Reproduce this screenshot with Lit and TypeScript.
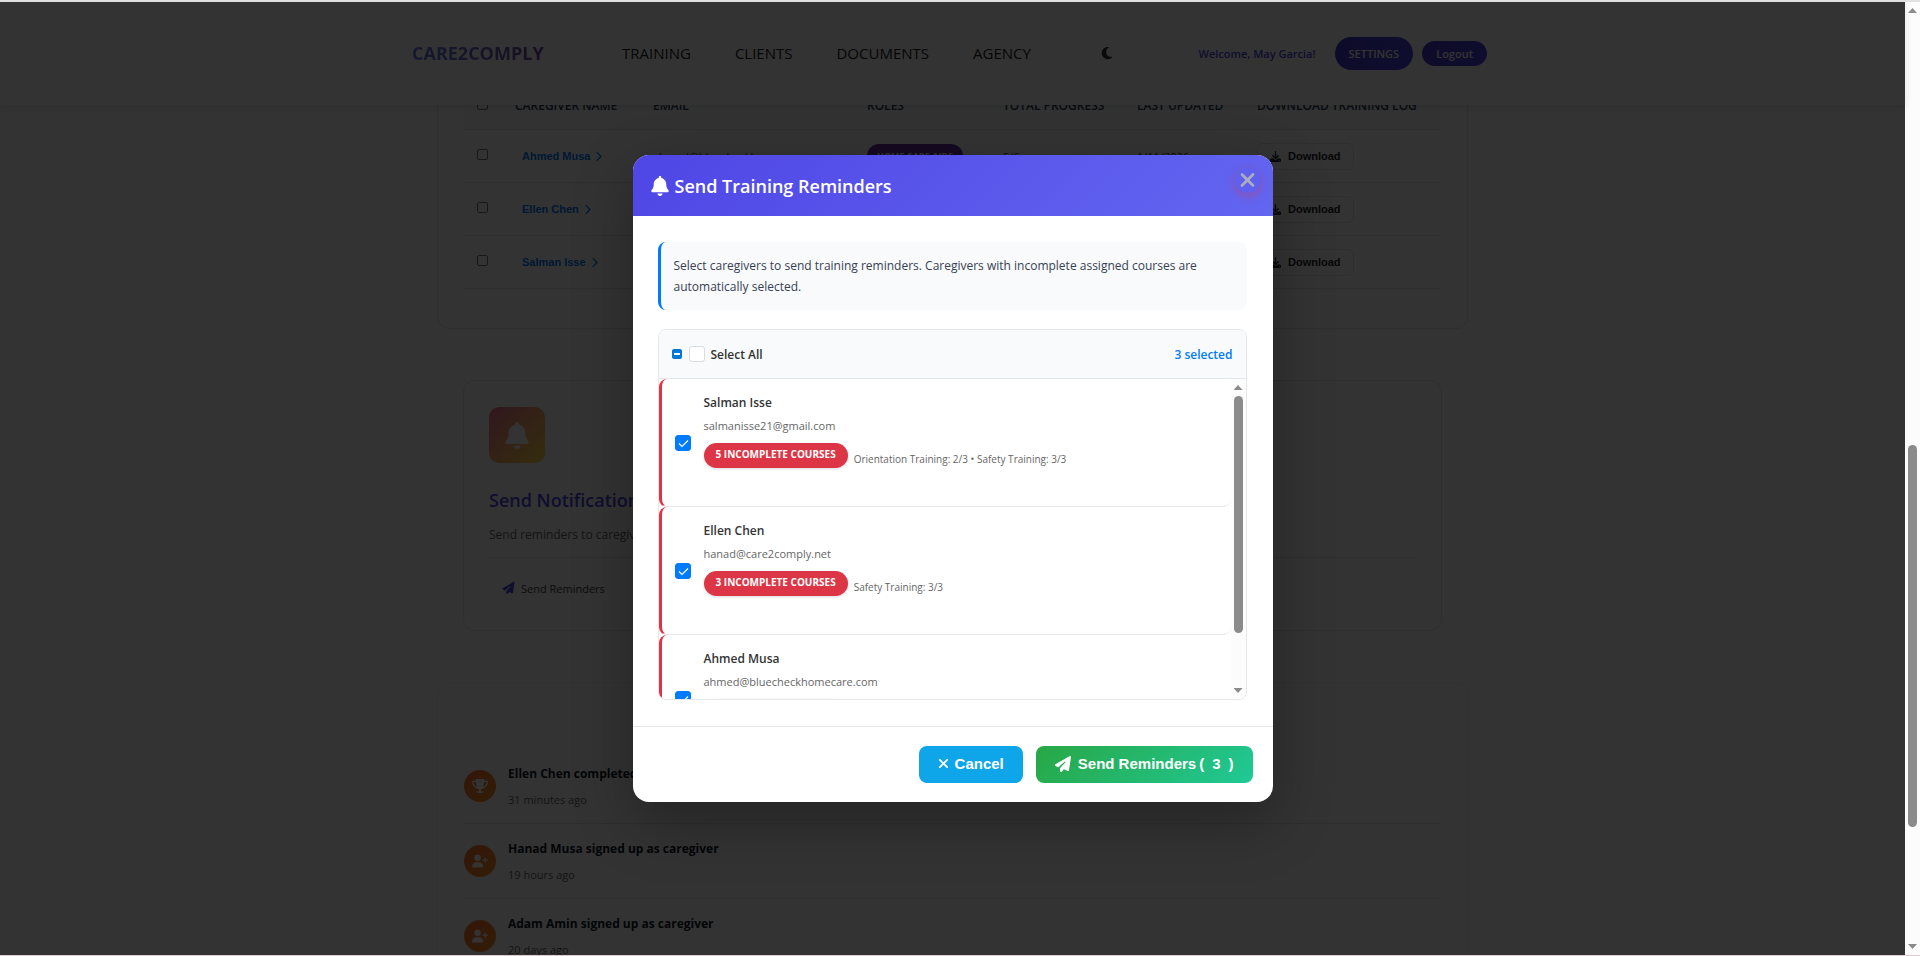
import { LitElement, html, css, svg, nothing } from "lit";
import { customElement, property, state } from "lit/decorators.js";

const bell = svg`<path d="M224 0c-17.7 0-32 14.300-32 32v19.200C119 66 64 130.600 64 208v18.800c0 47-17.300 92.400-48.500 127.600l-7.400 8.300c-8.400 9.400-10.400 22.900-5.300 34.400S19.400 416 32 416h384c12.600 0 24-7.400 29.200-18.900s3.100-25-5.300-34.400l-7.400-8.300C401.300 319.200 384 273.900 384 226.800V208c0-77.400-55-142-128-156.800V32c0-17.700-14.300-32-32-32zm45.300 493.300c12-12 18.700-28.300 18.700-45.300H160c0 17 6.700 33.300 18.700 45.300S207 512 224 512s33.300-6.700 45.300-18.700z"/>`;
const plane = svg`<path d="M498.100 5.600c10.100 7 15.400 19.100 13.500 31.200l-64 416c-1.500 9.700-7.400 18.200-16 23s-18.900 5.400-28 1.600L284 427.700l-68.500 74.100c-8.900 9.700-22.900 12.900-35.200 8.100S160 493.200 160 480v-83.600c0-4 1.500-7.800 4.200-10.800l167.600-182.800c5.800-6.300 5.600-16-.4-22s-15.700-6.400-22-.7L106 360.800l-88.300-44.200C7.100 311.300.3 300.700 0 288.900s5.900-22.800 16.100-28.700l448-256c10.700-6.100 23.900-5.500 34 1.400z"/>`;
const times = svg`<path d="M342.600 150.600c12.500-12.500 12.500-32.800 0-45.300s-32.800-12.500-45.300 0L192 210.700 86.600 105.400c-12.500-12.500-32.800-12.500-45.300 0s-12.500 32.800 0 45.300L146.700 256 41.400 361.400c-12.500 12.500-12.500 32.800 0 45.300s32.800 12.500 45.300 0L192 301.300l105.400 105.300c12.500 12.500 32.800 12.500 45.300 0s12.500-32.800 0-45.300L237.300 256l105.300-105.400z"/>`;
const moon = svg`<path d="M223.500 32C100 32 0 132.300 0 256s100 224 223.500 224c60.600 0 115.500-24.200 155.800-63.400 5-4.900 6.300-12.500 3.100-18.700s-10.100-9.700-17-8.500c-9.800 1.700-19.800 2.600-30.100 2.600-96.900 0-175.500-78.800-175.500-176 0-65.800 36-123.100 89.300-153.300 6.100-3.500 9.200-10.500 7.700-17.300s-7.300-11.900-14.300-12.500c-6.300-.5-12.600-.8-19-.8z"/>`;
const download = svg`<path d="M288 32c0-17.700-14.300-32-32-32s-32 14.300-32 32v242.700l-73.400-73.400c-12.500-12.500-32.800-12.500-45.300 0s-12.500 32.800 0 45.300l128 128c12.500 12.500 32.800 12.500 45.300 0l128-128c12.500-12.500 12.500-32.800 0-45.300s-32.800-12.500-45.300 0L288 274.700V32zM64 352c-35.300 0-64 28.700-64 64v32c0 35.300 28.700 64 64 64h384c35.300 0 64-28.700 64-64v-32c0-35.300-28.700-64-64-64H346.500l-45.300 45.300c-25 25-65.500 25-90.500 0L165.500 352H64zm368 56a24 24 0 1 1 0 48 24 24 0 1 1 0-48z"/>`;
const chevron = svg`<path d="M310.600 233.400c12.500 12.500 12.500 32.800 0 45.300l-192 192c-12.500 12.500-32.800 12.500-45.300 0s-12.500-32.800 0-45.300L242.700 256 73.400 86.600c-12.500-12.500-12.500-32.800 0-45.300s32.800-12.500 45.300 0l192 192z"/>`;
const trophy = svg`<path d="M400 0H176c-26.500 0-48.100 21.800-47.100 48.200.2 5.300.4 10.600.7 15.800H24C10.700 64 0 74.700 0 88c0 92.600 33.500 157 78.500 200.700 44.300 43.100 98.300 64.800 138.100 75.800 23.400 6.500 39.400 26 39.400 45.600 0 20.900-17 37.900-37.900 37.900H192c-17.700 0-32 14.300-32 32s14.300 32 32 32h192c17.700 0 32-14.300 32-32s-14.300-32-32-32h-26.100c-20.900 0-37.900-17-37.900-37.900 0-19.600 15.900-39.200 39.400-45.600 39.900-11 93.900-32.700 138.200-75.800C542.500 245 576 180.600 576 88c0-13.300-10.700-24-24-24H446.400c.3-5.200.5-10.400.7-15.800C448.100 21.800 426.500 0 400 0zM48.900 112h84.400c9.100 90.100 29.200 150.300 51.900 190.600-24.900-11-50.800-26.500-73.200-48.300-32-31.100-58-76-63-142.300zm415.200 142.300c-22.400 21.800-48.300 37.300-73.200 48.300 22.700-40.300 42.800-100.500 51.900-190.600h84.400c-5.100 66.300-31.100 111.200-63 142.300z"/>`;
const userPlus = svg`<path d="M96 128a128 128 0 1 1 256 0A128 128 0 1 1 96 128zM0 482.300C0 383.800 79.800 304 178.300 304h91.400C368.200 304 448 383.800 448 482.300c0 16.400-13.300 29.700-29.700 29.700H29.700C13.300 512 0 498.700 0 482.300zM504 312v-64h-64c-13.300 0-24-10.700-24-24s10.700-24 24-24h64v-64c0-13.300 10.700-24 24-24s24 10.700 24 24v64h64c13.300 0 24 10.700 24 24s-10.700 24-24 24h-64v64c0 13.300-10.700 24-24 24s-24-10.700-24-24z"/>`;

const icon = (shape: unknown, box: string, cls: string) =>
  html`<svg class=${cls} viewBox=${box} fill="currentColor" aria-hidden="true">${shape}</svg>`;

const base = css`
  * { box-sizing: border-box; }
  button, input { font: inherit; margin: 0; }
  button { border: 0; cursor: pointer; }
  a { text-decoration: none; color: inherit; }
  h1, h2, p, ul { margin: 0; padding: 0; }
  ul { list-style: none; }
  svg { display: block; flex: none; }
`;

@customElement("scroll-track")
class ScrollTrack extends LitElement {
  @property({ type: Number }) start = 0;
  @property({ type: Number }) size = 50;

  static styles = css`
    :host {
      display: flex;
      flex-direction: column;
      align-items: center;
      flex: none;
      width: 15px;
      padding: 6px 0;
      background: #fcfcfc;
    }
    .arrow {
      width: 9px;
      height: 5px;
      background: #8b8b8b;
      clip-path: polygon(50% 0, 100% 100%, 0 100%);
    }
    .down { clip-path: polygon(0 0, 100% 0, 50% 100%); }
    .lane { display: flex; flex-direction: column; flex: 1; width: 9px; margin: 6px 0; }
    .thumb { width: 9px; border-radius: 5px; background: #8b8b8b; }
  `;

  render() {
    return html`
      <div class="arrow"></div>
      <div class="lane">
        <div style="height:${this.start}%"></div>
        <div class="thumb" style="height:${this.size}%"></div>
      </div>
      <div class="arrow down"></div>
    `;
  }
}

@customElement("site-header")
class SiteHeader extends LitElement {
  static styles = [base, css`
    :host {
      display: block;
      flex: none;
      height: 103px;
      background: #fff;
      box-shadow: 0 2px 8px rgba(0, 0, 0, 0.1);
      position: relative;
      z-index: 1;
    }
    .bar {
      display: flex;
      align-items: center;
      width: 1081px;
      max-width: 100%;
      height: 100%;
      margin: 0 auto;
      padding: 0 6px 1px 0;
    }
    .logo {
      width: 210px;
      font-size: 18px;
      font-weight: 700;
      color: transparent;
      background: linear-gradient(90deg, #667eea, #764ba2 130px);
      background-clip: text;
      -webkit-background-clip: text;
    }
    nav { display: flex; gap: 44px; font-size: 15px; color: #222; }
    .theme { margin: 0 auto 0 70px; padding: 0; background: none; color: #333; }
    .moon { width: 12px; height: 14px; }
    .user { display: flex; align-items: center; gap: 9px; font-size: 11px; font-weight: 600; }
    .hello { color: #4f46e5; margin-right: 10px; }
    .settings, .logout { color: #fff; background: linear-gradient(135deg, #4338ca, #4f46e5); border-radius: 17px; }
    .settings { display: block; padding: 8px 14px; line-height: 17px; }
    .logout { padding: 4px 14px; line-height: 17px; }
  `];

  render() {
    return html`
      <div class="bar">
        <a class="logo" href="#">CARE2COMPLY</a>
        <nav>
          <a href="#">TRAINING</a><a href="#">CLIENTS</a><a href="#">DOCUMENTS</a><a href="#">AGENCY</a>
        </nav>
        <button class="theme" aria-label="Dark mode">${icon(moon, "0 0 384 512", "moon")}</button>
        <div class="user">
          <span class="hello">Welcome, May Garcia!</span>
          <a class="settings" href="#">SETTINGS</a>
          <button class="logout">Logout</button>
        </div>
      </div>
    `;
  }
}

interface Caregiver { name: string; email: string; role?: string; progress?: string; updated?: string; }

const caregivers: Caregiver[] = [
  { name: "Ahmed Musa", email: "ahmed@bluecheckhomecare.com", role: "HOME CARE AIDE", progress: "5/6 courses", updated: "1/11/2026" },
  { name: "Ellen Chen", email: "hanad@care2comply.net" },
  { name: "Salman Isse", email: "salmanisse21@gmail.com" },
];

const activity = [
  { text: "Ellen Chen completed training", when: "31 minutes ago", shape: trophy, box: "0 0 576 512" },
  { text: "Hanad Musa signed up as caregiver", when: "19 hours ago", shape: userPlus, box: "0 0 640 512" },
  { text: "Adam Amin signed up as caregiver", when: "20 days ago", shape: userPlus, box: "0 0 640 512" },
];

@customElement("agency-page")
class AgencyPage extends LitElement {
  static styles = [base, css`
    :host { display: block; flex: 1; min-height: 0; overflow: hidden; background: #fdfdfe; }
    .content { width: 1031px; max-width: 100%; margin: 0 auto; }
    .card { border: 1px solid #e6e6ea; border-radius: 12px; background: #fff; }
    .table-card { margin-top: -60px; padding: 36px 26px 39px; }
    table { width: 100%; border-collapse: separate; border-spacing: 0; table-layout: fixed; font-size: 11px; }
    th, td { padding: 0; text-align: left; border-bottom: 1px solid #e1e4e8; }
    th { height: 48px; font-weight: 600; font-size: 12px; color: #2c3e50; background: #fafbfc; white-space: nowrap; }
    td { height: 53px; color: #444; }
    .c-check { width: 51px; padding-left: 13px; }
    .c-name { width: 138px; }
    .c-email { width: 214px; }
    .c-role { width: 136px; }
    .c-progress { width: 134px; }
    .c-date { width: 120px; }
    .tick {
      display: block;
      appearance: none;
      width: 11px;
      height: 11px;
      margin-bottom: 3px;
      border: 1px solid #767676;
      border-radius: 2px;
    }
    .person {
      display: flex;
      align-items: center;
      gap: 6px;
      padding-left: 7px;
      font: bold 11px "Liberation Sans", Arial, sans-serif;
      color: #007bff;
    }
    .chev { width: 6px; height: 11px; }
    .role {
      display: inline-block;
      padding: 0 10px;
      line-height: 24px;
      border-radius: 12px;
      background: #6b2fa0;
      color: #fff;
      font-size: 9px;
      font-weight: 700;
    }
    .dl {
      display: flex;
      align-items: center;
      gap: 7px;
      height: 27px;
      padding: 0 12px;
      border: 1px solid #e1e4e8;
      border-radius: 6px;
      background: #fff;
      color: #1f2328;
      font: bold 11px "Liberation Sans", Arial, sans-serif;
    }
    .dl-icon { width: 11px; height: 11px; }
    .notify { margin: 51px 26px 0; padding: 26px 25px 23px; }
    .tile {
      display: grid;
      place-items: center;
      width: 56px;
      height: 56px;
      border-radius: 10px;
      background: linear-gradient(135deg, #fa709a, #fee140);
      color: #fff;
    }
    .tile-icon { width: 24px; height: 27px; }
    .notify h2 { margin-top: 24px; font-size: 18px; line-height: 26px; font-weight: 600; color: #4f46e5; }
    .notify p { margin-top: 12px; padding-bottom: 12px; font-size: 12px; line-height: 20px; color: #666; border-bottom: 1px solid #e1e4e8; }
    .remind {
      display: flex;
      align-items: center;
      gap: 6px;
      margin-top: 11px;
      padding: 0 13px;
      height: 38px;
      border-radius: 8px;
      background: #fcfcfd;
      color: #444;
      font-size: 11px;
      font-weight: 500;
    }
    .remind-icon { width: 13px; height: 12px; color: #4f46e5; }
    .activity { margin-top: 51px; padding: 66px 26px; border-color: #f4f4f6; }
    .event { display: flex; align-items: center; gap: 12px; height: 75px; border-bottom: 1px solid #e1e4e8; }
    .dot {
      display: grid;
      place-items: center;
      width: 32px;
      height: 32px;
      border-radius: 50%;
      background: linear-gradient(135deg, #ff6b35, #f7931e);
      color: #fff;
    }
    .dot-icon { width: 16px; height: 14px; }
    .what { font-size: 12px; line-height: 20px; font-weight: 700; color: #111827; }
    .when { margin-top: 7px; font-size: 11px; line-height: 18px; color: #666; }
  `];

  render() {
    return html`
      <main class="content">
        <section class="card table-card">
          <table>
            <thead>
              <tr>
                <th class="c-check"><input class="tick" type="checkbox" aria-label="Select all caregivers" /></th>
                <th class="c-name">CAREGIVER NAME</th>
                <th class="c-email">EMAIL</th>
                <th class="c-role">ROLES</th>
                <th class="c-progress">TOTAL PROGRESS</th>
                <th class="c-date">LAST UPDATED</th>
                <th>DOWNLOAD TRAINING LOG</th>
              </tr>
            </thead>
            <tbody>
              ${caregivers.map((c) => html`
                <tr>
                  <td class="c-check"><input class="tick" type="checkbox" aria-label=${c.name} /></td>
                  <td><a class="person" href="#">${c.name}${icon(chevron, "40 0 300 512", "chev")}</a></td>
                  <td>${c.email}</td>
                  <td>${c.role ? html`<span class="role">${c.role}</span>` : nothing}</td>
                  <td>${c.progress}</td>
                  <td>${c.updated}</td>
                  <td><button class="dl">${icon(download, "0 0 512 512", "dl-icon")}Download</button></td>
                </tr>
              `)}
            </tbody>
          </table>
        </section>
        <section class="card notify">
          <div class="tile">${icon(bell, "0 0 448 512", "tile-icon")}</div>
          <h2>Send Notifications</h2>
          <p>Send reminders to caregivers</p>
          <button class="remind">${icon(plane, "0 0 512 512", "remind-icon")}Send Reminders</button>
        </section>
        <section class="card activity">
          ${activity.map((a) => html`
            <div class="event">
              <div class="dot">${icon(a.shape, a.box, "dot-icon")}</div>
              <div>
                <div class="what">${a.text}</div>
                <div class="when">${a.when}</div>
              </div>
            </div>
          `)}
        </section>
      </main>
    `;
  }
}

const pending = [
  { name: "Salman Isse", email: "salmanisse21@gmail.com", count: 5, detail: "Orientation Training: 2/3 • Safety Training: 3/3" },
  { name: "Ellen Chen", email: "hanad@care2comply.net", count: 3, detail: "Safety Training: 3/3" },
  { name: "Ahmed Musa", email: "ahmed@bluecheckhomecare.com", count: 1, detail: "Safety Training: 1/3" },
];

@customElement("reminder-dialog")
class ReminderDialog extends LitElement {
  @state() private chosen = new Set(pending.map((p) => p.name));

  static styles = [base, css`
    :host {
      display: block;
      width: 640px;
      max-width: 100%;
      border-radius: 16px;
      overflow: hidden;
      background: #fff;
      box-shadow: 0 20px 60px rgba(0, 0, 0, 0.3);
    }
    .head {
      display: flex;
      align-items: center;
      gap: 6px;
      height: 61px;
      padding: 0 12px 0 18px;
      color: #fff;
      background: linear-gradient(135deg, #4f46e5, #6366f1);
    }
    .bell { width: 18px; height: 20px; }
    h1 { flex: 1; font-size: 18px; line-height: 24px; font-weight: 600; }
    .close {
      display: grid;
      place-items: center;
      align-self: flex-start;
      width: 26px;
      height: 26px;
      margin-top: 12px;
      padding: 0;
      border-radius: 50%;
      background: #6060ee;
      color: #a9adbd;
      box-shadow: 0 3px 9px rgba(220, 53, 69, 0.4);
    }
    .close-icon { width: 17px; height: 22px; }
    .body { padding: 26px 26px 26px 25px; }
    .info {
      padding: 13px;
      border-left: 3px solid #007bff;
      border-radius: 8px;
      background: #f8fafc;
      color: #374151;
      font-size: 12px;
      line-height: 21px;
    }
    .list { margin-top: 19px; border: 1px solid #e5e7eb; border-radius: 8px; overflow: hidden; }
    .list-head {
      display: flex;
      align-items: center;
      justify-content: space-between;
      height: 49px;
      padding: 0 13px;
      border-bottom: 1px solid #e5e7eb;
      background: #f8fafc;
      font-size: 12px;
      font-weight: 600;
    }
    .all { display: flex; align-items: center; color: #333; }
    .mixed {
      appearance: none;
      width: 10px;
      height: 10px;
      border-radius: 2px;
      background: linear-gradient(#fff, #fff) center / 6px 2px no-repeat #0078d7;
    }
    .box {
      width: 16px;
      height: 16px;
      margin: 0 6px 0 7px;
      border: 1px solid #d9dce0;
      border-radius: 3px;
      background: #fff;
    }
    .count { color: #007bff; }
    .rows { display: flex; height: 320px; }
    ul { flex: 1; overflow: hidden; }
    .row {
      display: flex;
      align-items: center;
      gap: 13px;
      height: 128px;
      padding: 0 13px;
      border-left: 3px solid #dc3545;
      border-bottom: 1px solid #e5e7eb;
      border-radius: 8px;
    }
    .check {
      flex: none;
      appearance: none;
      width: 16px;
      height: 16px;
      border: 1px solid #d9dce0;
      border-radius: 3px;
      background: #fff;
    }
    .check:checked {
      border-color: #007bff;
      background: #007bff url("data:image/svg+xml,%3Csvg xmlns='http://www.w3.org/2000/svg' viewBox='0 0 14 14' fill='none' stroke='white' stroke-width='1.2'%3E%3Cpath d='M3 7.500l3 3 6-6'/%3E%3C/svg%3E") center / 14px no-repeat;
    }
    .who { display: block; height: 98px; }
    .name { display: block; font-size: 12px; line-height: 17px; font-weight: 600; color: #333; }
    .mail { display: block; margin-top: 6px; font-size: 11px; line-height: 17px; color: #666; }
    .facts { display: flex; gap: 6px; margin-top: 9px; }
    .badge {
      height: 25px;
      padding: 0 12px;
      border-radius: 13px;
      background: #dc3545;
      box-shadow: 0 1px 3px rgba(0, 0, 0, 0.15);
      color: #fff;
      font-size: 10px;
      line-height: 23px;
      font-weight: 700;
    }
    .detail { padding-top: 8px; font-size: 10px; line-height: 17px; color: #666; }
    .foot {
      display: flex;
      justify-content: flex-end;
      gap: 13px;
      padding: 19px 20px;
      border-top: 1px solid #e5e7eb;
    }
    .btn {
      display: flex;
      align-items: center;
      height: 37px;
      padding: 0 19px 2px;
      border-radius: 8px;
      color: #fff;
      font: bold 15px "Liberation Sans", Arial, sans-serif;
    }
    .cancel { gap: 6px; background: #0ea5e9; }
    .send { gap: 7px; background: linear-gradient(135deg, #28a745, #20c997); }
    .total { display: flex; gap: 8px; margin-left: -4px; }
    .x { width: 11px; height: 15px; }
    .plane { width: 16px; height: 16px; }
  `];

  private toggle(name: string) {
    const next = new Set(this.chosen);
    next.has(name) ? next.delete(name) : next.add(name);
    this.chosen = next;
  }

  render() {
    return html`
      <header class="head">
        ${icon(bell, "0 0 448 512", "bell")}
        <h1>Send Training Reminders</h1>
        <button class="close" aria-label="Close">${icon(times, "0 0 384 512", "close-icon")}</button>
      </header>
      <div class="body">
        <p class="info">
          Select caregivers to send training reminders. Caregivers with incomplete assigned courses are automatically selected.
        </p>
        <div class="list">
          <div class="list-head">
            <label class="all">
              <input class="mixed" type="checkbox" .indeterminate=${true} />
              <span class="box"></span>Select All
            </label>
            <span class="count">${this.chosen.size} selected</span>
          </div>
          <div class="rows">
            <ul>
              ${pending.map((p, i) => html`
                <li class="row">
                  <input class="check" id="p${i}" type="checkbox" .checked=${this.chosen.has(p.name)} @change=${() => this.toggle(p.name)} />
                  <label class="who" for="p${i}">
                    <span class="name">${p.name}</span>
                    <span class="mail">${p.email}</span>
                    <span class="facts">
                      <span class="badge">${p.count} INCOMPLETE COURSES</span>
                      <span class="detail">${p.detail}</span>
                    </span>
                  </label>
                </li>
              `)}
            </ul>
            <scroll-track .start=${0} .size=${83}></scroll-track>
          </div>
        </div>
      </div>
      <footer class="foot">
        <button class="btn cancel">${icon(times, "0 0 384 512", "x")}Cancel</button>
        <button class="btn send">
          ${icon(plane, "0 0 512 512", "plane")}<span>Send Reminders</span>
          <span class="total"><span>(</span><span>${this.chosen.size}</span><span>)</span></span>
        </button>
      </footer>
    `;
  }
}

@customElement("app-root")
class AppRoot extends LitElement {
  static styles = [base, css`
    :host {
      display: flex;
      height: 100vh;
      border-top: 2px solid #dfe1e3;
      border-bottom: 1px solid #dccdd1;
      box-sizing: border-box;
      overflow: hidden;
      font-family: "Open Sans", "Noto Sans", sans-serif;
    }
    .view { position: relative; display: flex; flex-direction: column; flex: 1; min-width: 0; }
    .overlay {
      position: absolute;
      inset: 0;
      z-index: 2;
      display: flex;
      align-items: center;
      justify-content: center;
      background: rgba(0, 0, 0, 0.8);
    }
  `];

  render() {
    return html`
      <div class="view">
        <site-header></site-header>
        <agency-page></agency-page>
        <div class="overlay">
          <reminder-dialog role="dialog" aria-modal="true" aria-label="Send Training Reminders"></reminder-dialog>
        </div>
      </div>
      <scroll-track .start=${46.4} .size=${41.5}></scroll-track>
    `;
  }
}
